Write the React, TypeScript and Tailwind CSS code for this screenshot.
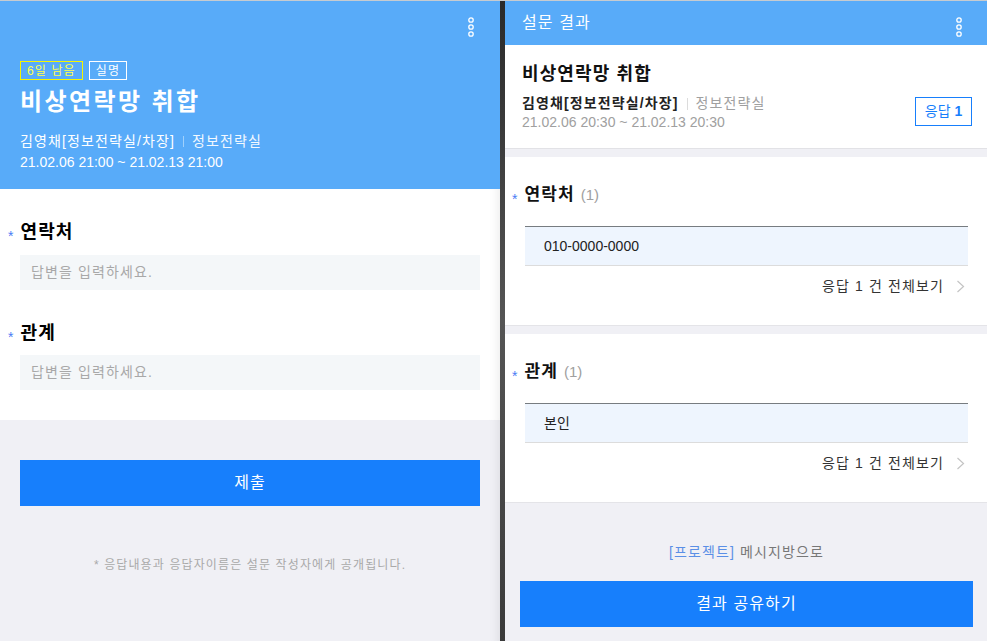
import React from "react";

function Dots({ className = "" }: { className?: string }) {
  return (
    <svg width="8" height="20" viewBox="0 0 8 20" className={className} fill="none" stroke="white" strokeWidth="1.3">
      <circle cx="4" cy="3" r="2.2" />
      <circle cx="4" cy="10" r="2.2" />
      <circle cx="4" cy="17" r="2.2" />
    </svg>
  );
}

function Star() {
  return <span className="text-[#4a7cf5] text-[14px] leading-none mt-[7px] tracking-normal">*</span>;
}

function Chevron() {
  return (
    <svg width="9" height="13" viewBox="0 0 9 13" fill="none" stroke="#c4c4c4" strokeWidth="1.2">
      <polyline points="1.5,1 7.5,6.5 1.5,12" />
    </svg>
  );
}

function ResultSection({ label, answer }: { label: string; answer: string }) {
  return (
    <div className="bg-white border-b border-[#e4e4e8] pt-[26px] pb-[29px] pl-[7px] pr-[19px]">
      <div className="flex items-center h-[24px]">
        <Star />
        <span className="ml-[7px] text-[17px] font-bold text-[#111]">{label}</span>
        <span className="ml-[6px] text-[15px] text-[#a0a0a0] tracking-normal">(1)</span>
      </div>
      <div className="ml-[13px] mt-[19px] h-[40px] border-t border-[#777c80] border-b border-b-[#dcdcdc] bg-[#eef5fe] flex items-center pl-[19px] text-[14px] text-[#222] tracking-normal">
        {answer}
      </div>
      <div className="mt-[10px] h-[20px] flex items-center justify-end text-[14px] text-[#333]">
        <span>응답 1 건 전체보기</span>
        <span className="ml-[12px] mr-[3px] flex items-center">
          <Chevron />
        </span>
      </div>
    </div>
  );
}

export default function App() {
  return (
    <div className="w-[987px] h-[641px] overflow-hidden flex flex-col border-t border-[#c6cbd0] tracking-[0.07em] font-['Liberation_Sans','Noto_Sans_CJK_KR',sans-serif]">
      <div className="flex flex-1 min-h-0">
        {/* Left panel */}
        <div className="w-[500px] flex flex-col bg-[#f0f0f5]">
          <div className="relative h-[188px] bg-[#58abf9] pt-[60px] pl-[20px] text-white">
            <Dots className="absolute top-[16px] right-[25px]" />
            <div className="flex gap-[6px]">
              <span className="h-[19px] px-[6px] border border-[#f5f500] text-[#ffff4a] text-[12px] flex items-center leading-none">6일 남음</span>
              <span className="h-[19px] px-[6px] border border-white text-white text-[12px] flex items-center leading-none">실명</span>
            </div>
            <div className="mt-[6px] text-[24px] font-bold leading-[32px] tracking-[0.1em]">비상연락망 취합</div>
            <div className="mt-[13px] text-[14px] leading-[21px] flex items-center">
              <span>김영채[정보전략실/차장]</span>
              <span className="mx-[8px] w-px h-[11px] bg-[#9fd0fc]" />
              <span className="text-[#f2f8ff]">정보전략실</span>
            </div>
            <div className="text-[14px] leading-[21px] tracking-normal">21.02.06 21:00 ~ 21.02.13 21:00</div>
          </div>
          <div className="bg-white pt-[30px] pb-[30px] pl-[8px] pr-[20px] shadow-[inset_-10px_0_10px_-8px_rgba(0,0,0,0.08)]">
            <div className="flex items-center h-[26px]">
              <Star />
              <span className="ml-[7px] text-[18px] font-bold text-black">연락처</span>
            </div>
            <div className="ml-[12px] mt-[10px] h-[35px] bg-[#f4f7f9] flex items-center pl-[11px] text-[14px] text-[#a8a8a8]">답변을 입력하세요.</div>
            <div className="flex items-center h-[26px] mt-[30px]">
              <Star />
              <span className="ml-[7px] text-[18px] font-bold text-black">관계</span>
            </div>
            <div className="ml-[12px] mt-[9px] h-[35px] bg-[#f4f7f9] flex items-center pl-[11px] text-[14px] text-[#a8a8a8]">답변을 입력하세요.</div>
          </div>
          <div className="flex-1 px-[20px] pt-[40px] shadow-[inset_-10px_0_10px_-8px_rgba(0,0,0,0.08)]">
            <div className="h-[46px] bg-[#177ffc] flex items-center justify-center text-white text-[16px]">제출</div>
            <div className="mt-[50px] text-center text-[12px] leading-[18px] text-[#a9a9a9]">* 응답내용과 응답자이름은 설문 작성자에게 공개됩니다.</div>
          </div>
        </div>

        {/* Divider strip */}
        <div className="w-[5px] bg-gradient-to-b from-[#2a2a2a] via-[#555] to-[#3a3a3a]" />

        {/* Right panel */}
        <div className="flex-1 flex flex-col bg-[#f0f0f5]">
          <div className="relative h-[44px] bg-[#58abf9] flex items-center pl-[17px] text-white text-[16px]">
            <span>설문 결과</span>
            <Dots className="absolute top-[16px] right-[24px]" />
          </div>
          <div className="relative bg-white border-b border-[#e2e2e6] pt-[16px] pl-[17px] h-[104px]">
            <div className="text-[18px] font-bold leading-[26px] text-[#111]">비상연락망 취합</div>
            <div className="mt-[7px] text-[14px] leading-[19px] flex items-center">
              <span className="font-bold text-[#222]">김영채[정보전략실/차장]</span>
              <span className="mx-[8px] w-px h-[12px] bg-[#dcdcdc]" />
              <span className="text-[#a0a0a0]">정보전략실</span>
            </div>
            <div className="text-[14px] leading-[19px] text-[#a0a0a0] tracking-normal">21.02.06 20:30 ~ 21.02.13 20:30</div>
            <div className="absolute right-[15px] top-[52px] h-[29px] w-[57px] border border-[#177ffc] flex items-center justify-center text-[14px] text-[#177ffc] tracking-normal">
              응답&nbsp;<span className="font-bold">1</span>
            </div>
          </div>
          <div className="h-[8px]" />
          <ResultSection label="연락처" answer="010-0000-0000" />
          <div className="h-[8px]" />
          <ResultSection label="관계" answer="본인" />
          <div className="flex-1 pl-[15px] pr-[14px] pt-[39px]">
            <div className="text-center text-[14px] leading-[20px] text-[#777]">
              <span className="text-[#5b8fe6]">[프로젝트]</span> 메시지방으로
            </div>
            <div className="mt-[19px] h-[46px] bg-[#177ffc] flex items-center justify-center text-white text-[16px]">결과 공유하기</div>
          </div>
        </div>
      </div>
    </div>
  );
}
